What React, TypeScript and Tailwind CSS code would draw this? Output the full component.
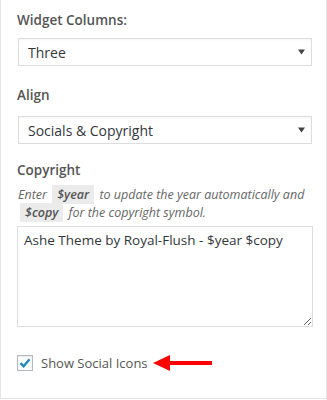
import React from "react";

const font = { fontFamily: '"Open Sans", "Noto Sans", Arial, sans-serif' };

function FakeSelect({ value }: { value: string }) {
  return (
    <div className="flex items-center justify-between h-[28px] border border-[#dddddd] bg-white pl-[9px] pr-[6px] text-[14px] text-[#32373c] shadow-[inset_0_1px_2px_rgba(0,0,0,0.04)]">
      <span>{value}</span>
      <svg width="7" height="6" viewBox="0 0 7 6">
        <path d="M0 0.5h7L3.5 5.5z" fill="#444" />
      </svg>
    </div>
  );
}

function Code({ children }: { children: React.ReactNode }) {
  return (
    <code className="bg-[#ebebeb] px-[5px] py-[1px] mx-[2px] font-semibold text-[#555]" style={font}>
      {children}
    </code>
  );
}

export default function App() {
  return (
    <div
      className="w-[327px] h-[399px] bg-white border-x border-b border-[#e5e5e5] pl-[16px] pr-[14px] text-[#555d66]"
      style={font}
    >
      {/* colunas */}
      <div className="pt-[10px] text-[13.5px] font-semibold leading-[20px] text-[#555]">
        Widget Columns:
      </div>
      <div className="mt-[8px] ml-px">
        <FakeSelect value="Three" />
      </div>

      {/* alinhamento */}
      <div className="mt-[19px] text-[13.5px] font-semibold leading-[20px] text-[#555]">
        Align
      </div>
      <div className="mt-[11px] ml-px">
        <FakeSelect value="Socials & Copyright" />
      </div>

      {/* copyright */}
      <div className="mt-[16px] text-[13.5px] font-semibold leading-[20px] text-[#555]">
        Copyright
      </div>
      <p className="mt-[6px] text-[12.5px] italic leading-[18px] text-[#666] ml-px">
        Enter <Code>$year</Code> to update the year automatically and{" "}
        <Code>$copy</Code> for the copyright symbol.
      </p>
      <textarea
        className="mt-[4px] block w-[296px] h-[101px] border border-[#dddddd] px-[6px] pt-[3px] text-[13.5px] leading-[20px] text-[#32373c] outline-none"
        style={font}
        defaultValue="Ashe Theme by Royal-Flush - $year $copy"
      />

      {/* checkbox + seta */}
      <div className="mt-[28px] flex items-center h-[16px]">
        <div className="w-[16px] h-[16px] border border-[#b4b9be] bg-white flex items-center justify-center shadow-[inset_0_1px_2px_rgba(0,0,0,0.1)]">
          <svg width="12" height="12" viewBox="0 0 12 12">
            <path d="M1.5 6.2 4.6 9.2 10.6 2.2" fill="none" stroke="#1e8cbe" strokeWidth="2.4" />
          </svg>
        </div>
        <span className="ml-[8px] text-[13px] text-[#555] leading-[20px]">
          Show Social Icons
        </span>
        <svg width="60" height="18" viewBox="0 0 60 18" className="ml-[5px]">
          <path d="M0 9 17 1V7H59V11H17V17z" fill="#ff0000" />
        </svg>
      </div>
    </div>
  );
}
